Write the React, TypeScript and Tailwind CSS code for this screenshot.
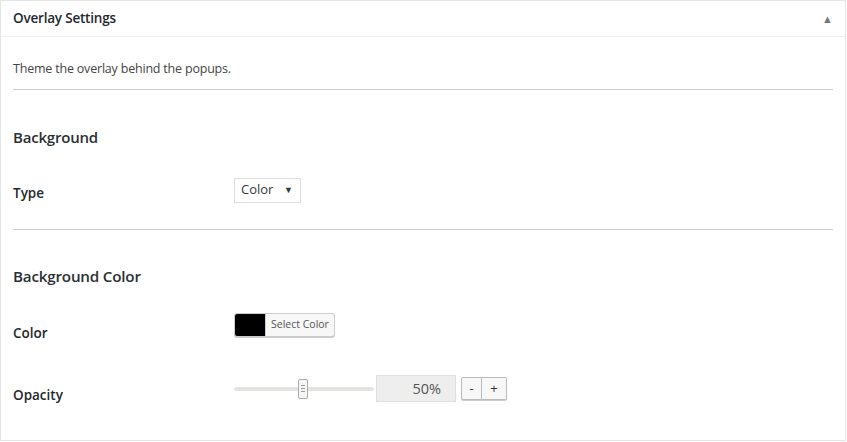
import { useState } from 'react'

const font = { fontFamily: '"Open Sans", "Noto Sans", sans-serif' }

export default function App() {
  const [opacity, setOpacity] = useState(50)

  return (
    <div className="w-[847px] h-[442px] bg-white" style={font}>
      <div className="h-[441px] w-[846px] border border-[#e5e5e5] bg-white">
        {/* header */}
        <div className="h-[36px] border-b border-[#eeeeee] flex items-center justify-between pl-[12px] pr-[12px]">
          <h2 className="text-[13.5px] font-semibold text-[#23282d] tracking-[-0.2px]">Overlay Settings</h2>
          <span className="text-[11px] text-[#72777c] leading-none">▲</span>
        </div>

        <div className="px-[12px]">
          <p className="pt-[22px] text-[12.5px] text-[#444] leading-[20px] tracking-[-0.2px]">Theme the overlay behind the popups.</p>
          <hr className="mt-[10px] border-t border-[#cccccc]" />

          <h3 className="mt-[36px] text-[15px] font-semibold text-[#2a2f34] leading-[22px] tracking-[-0.2px]">Background</h3>
          <div className="mt-[29px] flex items-center">
            <label className="w-[221px] text-[13.5px] font-semibold text-[#23282d] pt-[6px]">Type</label>
            <div className="h-[25px] w-[67px] border border-[#dddddd] flex items-center justify-between pl-[6px] pr-[7px] text-[13px] text-[#32373c]">
              <span>Color</span>
              <span className="text-[9px]">▼</span>
            </div>
          </div>
          <hr className="mt-[26px] border-t border-[#cccccc]" />

          <h3 className="mt-[35px] text-[15.2px] font-semibold text-[#2a2f34] leading-[22px] tracking-[-0.2px]">Background Color</h3>
          <div className="mt-[26px] flex items-start">
            <label className="w-[221px] text-[13.5px] font-semibold text-[#23282d] pt-[10px]">Color</label>
            <button className="h-[24px] flex items-stretch border border-[#cccccc] rounded-[3px] overflow-hidden shadow-[0_1px_0_#ccc] bg-[#f7f7f7]">
              <span className="w-[30px] bg-black" />
              <span className="px-[5px] flex items-center text-[10.5px] text-[#555] border-l border-[#ccc]">Select Color</span>
            </button>
          </div>

          <div className="mt-[29px] flex items-center">
            <label className="w-[221px] text-[13.5px] font-semibold text-[#23282d] pt-[12px]">Opacity</label>
            <div className="relative w-[140px] h-[20px] flex items-center">
              <div className="w-full h-[4px] bg-[#e5e3e0] rounded-sm" />
              <div
                className="absolute top-0 w-[10px] h-[20px] bg-[#f6f6f6] border border-[#aaa] rounded-[2px] flex flex-col items-center justify-center gap-[2px]"
                style={{ left: `${(opacity / 100) * 130 - 1}px` }}
              >
                <span className="w-[4px] h-px bg-[#999]" />
                <span className="w-[4px] h-px bg-[#999]" />
                <span className="w-[4px] h-px bg-[#999]" />
              </div>
            </div>
            <div className="ml-[2px] w-[80px] h-[27px] bg-[#eeeeee] border border-[#e0e0e0] flex items-center justify-end pr-[14px] text-[14.5px] text-[#555]">
              {opacity}%
            </div>
            <div className="ml-[5px] flex">
              <button onClick={() => setOpacity(o => Math.max(0, o - 1))} className="w-[21px] h-[23px] border border-[#bbb] rounded-l-[2px] bg-[#f7f7f7] text-[13px] text-[#333] leading-none shadow-[0_1px_0_#ccc]">-</button>
              <button onClick={() => setOpacity(o => Math.min(100, o + 1))} className="w-[25px] h-[23px] border border-l-0 border-[#bbb] rounded-r-[2px] bg-[#f7f7f7] text-[13px] text-[#333] leading-none shadow-[0_1px_0_#ccc]">+</button>
            </div>
          </div>
        </div>
      </div>
    </div>
  )
}
